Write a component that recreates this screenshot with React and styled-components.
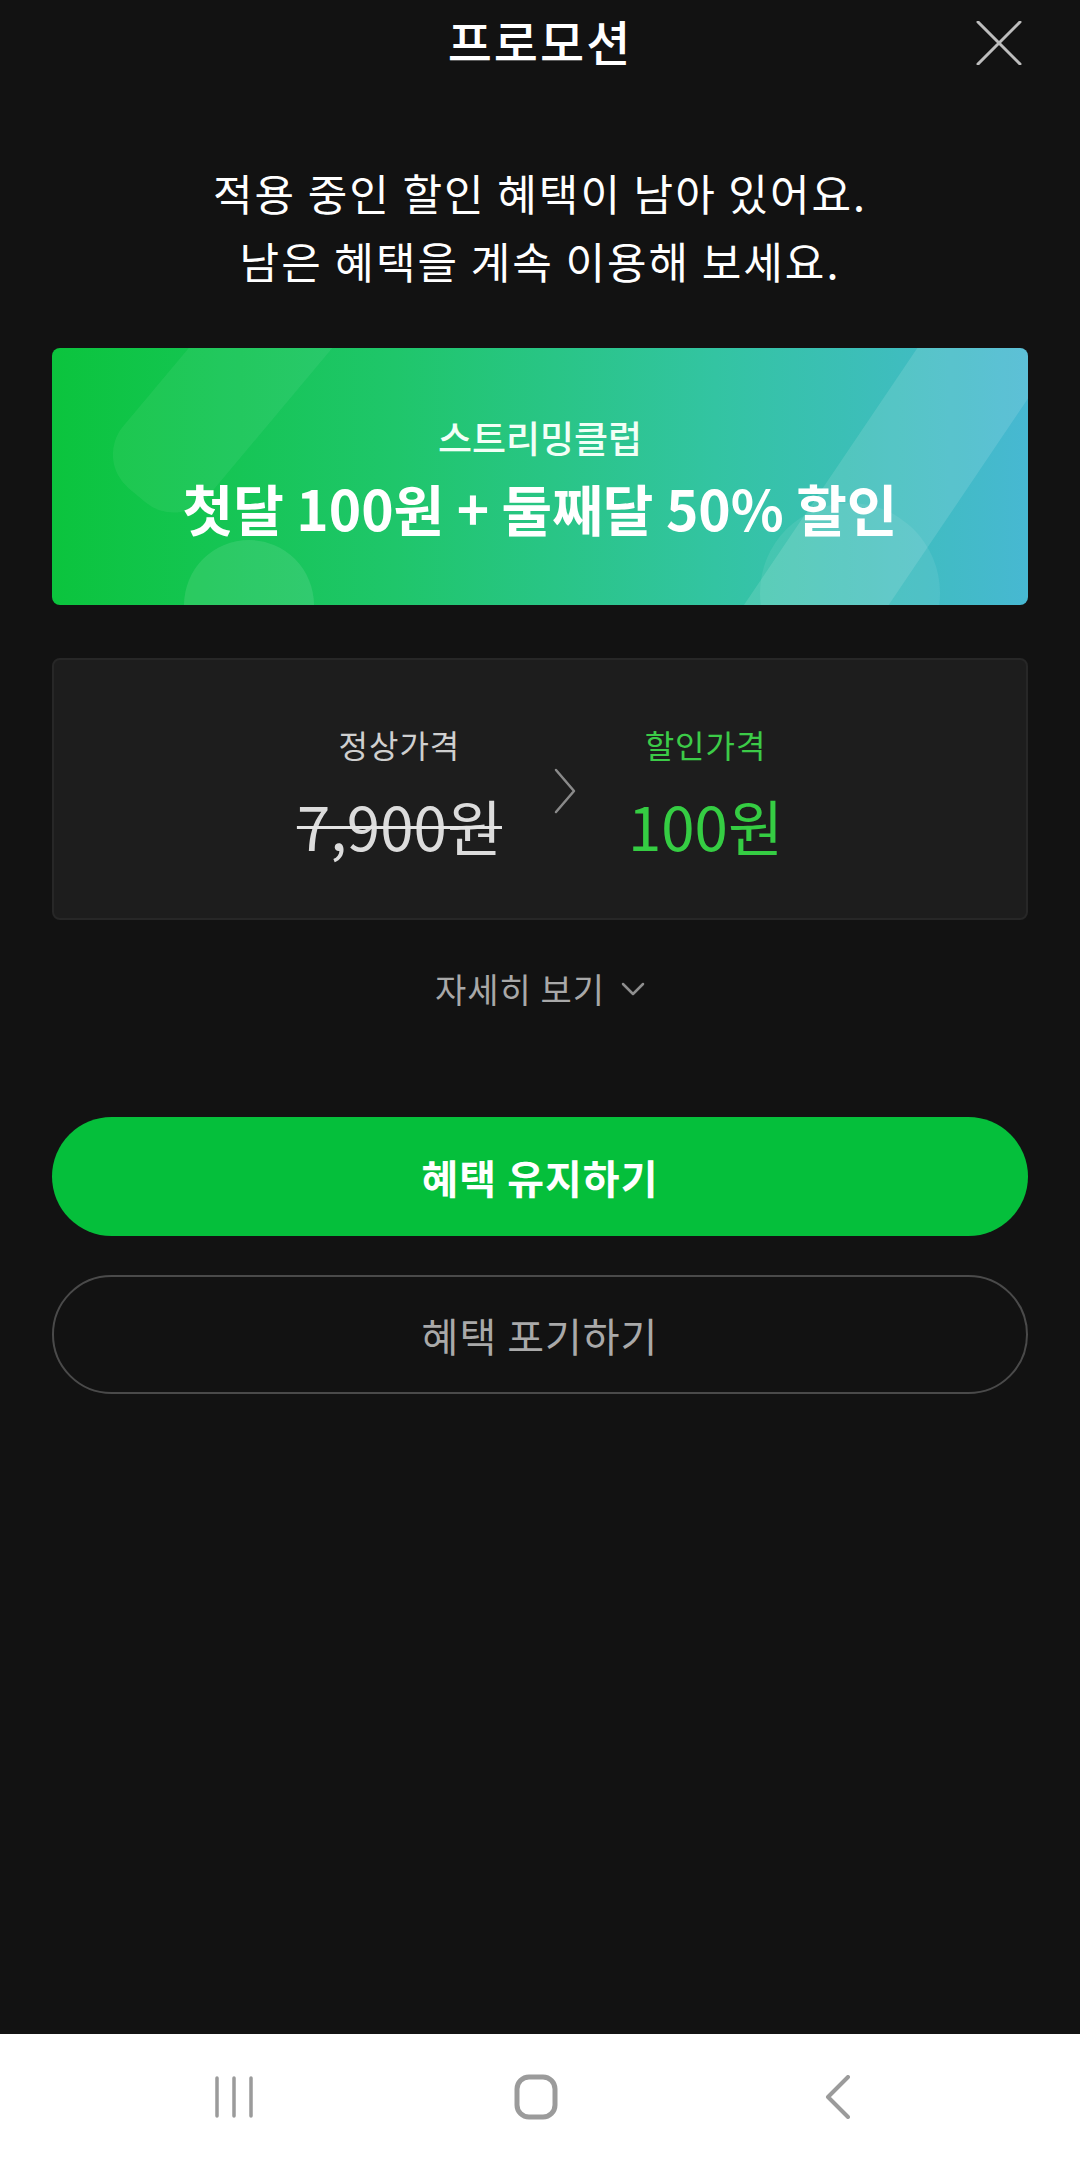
import React from "react";
import styled, { createGlobalStyle } from "styled-components";

const GlobalStyle = createGlobalStyle`
  html, body {
    margin: 0;
    padding: 0;
    background: #121212;
  }
  body {
    font-family: "Noto Sans CJK KR", "Noto Sans", sans-serif;
    -webkit-font-smoothing: antialiased;
  }
  * { box-sizing: border-box; }
`;

const Screen = styled.div`
  min-height: 2160px;
  width: 1080px;
  display: flex;
  flex-direction: column;
  background: #121212;
  color: #fff;
`;

const Main = styled.main`
  flex: 1;
  display: flex;
  flex-direction: column;
  padding: 0 52px;
`;

const Header = styled.header`
  position: relative;
  height: 80px;
  display: flex;
  align-items: center;
  justify-content: center;
`;

const Title = styled.h1`
  margin: 0;
  font-size: 48px;
  font-weight: 500;
  line-height: 56px;
  color: #fff;
  letter-spacing: 2px;
`;

const CloseButton = styled.button`
  position: absolute;
  right: 4px;
  top: 19px;
  width: 50px;
  height: 48px;
  padding: 0;
  border: 0;
  background: transparent;
  display: flex;
  align-items: center;
  justify-content: center;
`;

const Message = styled.p`
  margin: 78px 0 0;
  text-align: center;
  font-size: 43px;
  line-height: 68px;
  font-weight: 400;
  color: #fff;
  letter-spacing: 2px;
`;

const Banner = styled.section`
  position: relative;
  overflow: hidden;
  margin-top: 54px;
  height: 257px;
  border-radius: 8px;
  background: linear-gradient(90deg, #0bc43d 0%, #1fc66a 35%, #33c4a2 68%, #47b8d2 100%);
  display: flex;
  flex-direction: column;
  align-items: center;
  justify-content: center;
  gap: 14px;
`;

const Deco = styled.span`
  position: absolute;
  background: rgba(255, 255, 255, ${(p) => p.$alpha || 0.1});
  border-radius: ${(p) => p.$radius || "50%"};
  width: ${(p) => p.$w}px;
  height: ${(p) => p.$h}px;
  left: ${(p) => p.$x}px;
  top: ${(p) => p.$y}px;
  transform: rotate(${(p) => p.$rot || 0}deg);
`;

const BannerLabel = styled.div`
  position: relative;
  font-size: 37px;
  line-height: 46px;
  font-weight: 500;
  color: #f2fff6;
`;

const BannerHeadline = styled.div`
  position: relative;
  font-size: 55px;
  line-height: 66px;
  font-weight: 700;
  color: #fff;
`;

const PriceCard = styled.section`
  margin-top: 53px;
  background: #1d1d1d;
  border: 2px solid #272727;
  border-radius: 8px;
  padding: 63px 0 60px;
  display: flex;
  align-items: center;
  justify-content: center;
`;

const PriceColumn = styled.div`
  display: flex;
  flex-direction: column;
  align-items: center;
  gap: 27px;
`;

const PriceLabel = styled.div`
  font-size: 32px;
  line-height: 42px;
  color: ${(p) => (p.$accent ? "#3ccb48" : "#cfcfcf")};
  letter-spacing: 1px;
`;

const PriceValue = styled.div`
  font-size: 60px;
  line-height: 66px;
  font-weight: 400;
  color: ${(p) => (p.$accent ? "#35cd43" : "#dcdcdc")};
  text-decoration: ${(p) => (p.$struck ? "line-through" : "none")};
  text-decoration-thickness: 3px;
  text-decoration-color: #e4e4e4;
`;

const ArrowWrap = styled.div`
  margin: 0 52px;
  display: flex;
  align-items: center;
`;

const MoreLink = styled.button`
  align-self: center;
  margin-top: 47px;
  padding: 0;
  border: 0;
  background: transparent;
  display: flex;
  align-items: center;
  gap: 16px;
  font-family: inherit;
  font-size: 34px;
  line-height: 44px;
  color: #a8a8a8;
  letter-spacing: 1px;
`;

const Actions = styled.div`
  margin-top: 106px;
  display: flex;
  flex-direction: column;
  gap: 39px;
`;

const ActionButton = styled.button`
  height: 119px;
  border-radius: 60px;
  font-family: inherit;
  font-size: 40px;
  letter-spacing: 1px;
  border: ${(p) => (p.$primary ? "0" : "2px solid #4a4a4a")};
  background: ${(p) => (p.$primary ? "#05bf3b" : "transparent")};
  color: ${(p) => (p.$primary ? "#fff" : "#a9a9a9")};
  font-weight: ${(p) => (p.$primary ? 700 : 400)};
`;

const NavBar = styled.nav`
  height: 126px;
  background: #fff;
  display: flex;
  align-items: center;
  justify-content: center;
  padding-right: 8px;
`;

const NavSlot = styled.div`
  width: 302px;
  display: flex;
  justify-content: center;
  align-items: center;
`;

export default function App() {
  return (
    <>
      <GlobalStyle />
      <Screen>
        <Main>
          <Header>
            <Title>프로모션</Title>
            <CloseButton aria-label="닫기">
              <svg width="46" height="44" viewBox="0 0 46 44">
                <path d="M2 1 L44 43 M44 1 L2 43" stroke="#bdbdbd" strokeWidth="3" strokeLinecap="round" />
              </svg>
            </CloseButton>
          </Header>

          <Message>
            적용 중인 할인 혜택이 남아 있어요.
            <br />
            남은 혜택을 계속 이용해 보세요.
          </Message>

          <Banner>
            <Deco $w={110} $h={280} $x={120} $y={-100} $rot={40} $radius="44px" $alpha={0.06} />
            <Deco $w={130} $h={130} $x={132} $y={192} $alpha={0.1} />
            <Deco $w={120} $h={520} $x={790} $y={-130} $rot={34} $radius="50px" $alpha={0.12} />
            <Deco $w={180} $h={180} $x={708} $y={155} $alpha={0.08} />
            <BannerLabel>스트리밍클럽</BannerLabel>
            <BannerHeadline>첫달 100원 + 둘째달 50% 할인</BannerHeadline>
          </Banner>

          <PriceCard>
            <PriceColumn>
              <PriceLabel>정상가격</PriceLabel>
              <PriceValue $struck>7,900원</PriceValue>
            </PriceColumn>
            <ArrowWrap>
              <svg width="22" height="46" viewBox="0 0 22 46">
                <path d="M2 2 L20 23 L2 44" fill="none" stroke="#8a8a8a" strokeWidth="2.5" strokeLinecap="round" strokeLinejoin="round" />
              </svg>
            </ArrowWrap>
            <PriceColumn>
              <PriceLabel $accent>할인가격</PriceLabel>
              <PriceValue $accent>100원</PriceValue>
            </PriceColumn>
          </PriceCard>

          <MoreLink>
            자세히 보기
            <svg width="24" height="14" viewBox="0 0 24 14">
              <path d="M2 2 L12 12 L22 2" fill="none" stroke="#8e8e8e" strokeWidth="2.5" strokeLinecap="round" strokeLinejoin="round" />
            </svg>
          </MoreLink>

          <Actions>
            <ActionButton $primary>혜택 유지하기</ActionButton>
            <ActionButton>혜택 포기하기</ActionButton>
          </Actions>
        </Main>

        <NavBar>
          <NavSlot>
            <svg width="40" height="42" viewBox="0 0 40 42">
              <path d="M3 2 V40 M20 2 V40 M37 2 V40" stroke="#9b9b9b" strokeWidth="3.5" strokeLinecap="round" />
            </svg>
          </NavSlot>
          <NavSlot>
            <svg width="44" height="46" viewBox="0 0 44 46">
              <rect x="3" y="3" width="38" height="40" rx="12" fill="none" stroke="#9b9b9b" strokeWidth="5" />
            </svg>
          </NavSlot>
          <NavSlot>
            <svg width="28" height="44" viewBox="0 0 28 44">
              <path d="M24 2 L4 22 L24 42" fill="none" stroke="#9b9b9b" strokeWidth="4" strokeLinecap="round" strokeLinejoin="round" />
            </svg>
          </NavSlot>
        </NavBar>
      </Screen>
    </>
  );
}
